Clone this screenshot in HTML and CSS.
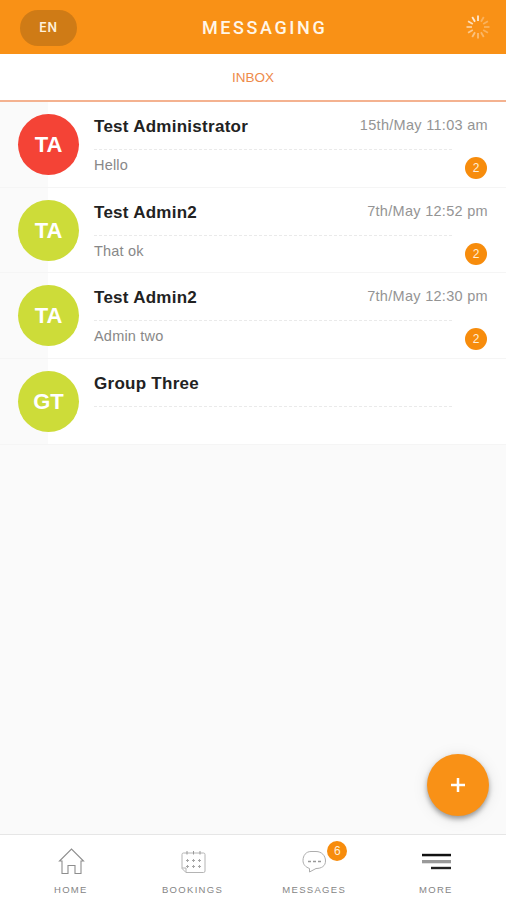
FILE: index.html
```html
<!DOCTYPE html>
<html lang="en">
<head>
<meta charset="utf-8">
<title>Messaging</title>
<link rel="stylesheet" href="styles.css">
</head>
<body>
<header class="topbar">
  <button class="lang">EN</button>
  <h1 class="title">MESSAGING</h1>
  <svg class="spinner" viewBox="-12 -12 24 24" stroke="#fff" stroke-width="1.8">
    <path d="M0-6V-11.500" opacity=".8"/>
    <path d="M0-6V-11.500" opacity=".3" transform="rotate(30)"/>
    <path d="M0-6V-11.500" opacity=".3" transform="rotate(60)"/>
    <path d="M0-6V-11.500" opacity=".3" transform="rotate(90)"/>
    <path d="M0-6V-11.500" opacity=".3" transform="rotate(120)"/>
    <path d="M0-6V-11.500" opacity=".35" transform="rotate(150)"/>
    <path d="M0-6V-11.500" opacity=".4" transform="rotate(180)"/>
    <path d="M0-6V-11.500" opacity=".45" transform="rotate(210)"/>
    <path d="M0-6V-11.500" opacity=".5" transform="rotate(240)"/>
    <path d="M0-6V-11.500" opacity=".55" transform="rotate(270)"/>
    <path d="M0-6V-11.500" opacity=".7" transform="rotate(300)"/>
    <path d="M0-6V-11.500" opacity=".8" transform="rotate(330)"/>
  </svg>
</header>
<nav class="tabs"><span class="tab">INBOX</span></nav>
<main class="content">
  <ul class="threads">
    <li class="thread">
      <div class="avatar red">TA</div>
      <div class="body">
        <div class="head"><span class="name">Test Administrator</span><time class="time">15th/May 11:03 am</time></div>
        <div class="rule"></div>
        <div class="foot"><span class="preview">Hello</span><span class="count">2</span></div>
      </div>
    </li>
    <li class="thread">
      <div class="avatar">TA</div>
      <div class="body">
        <div class="head"><span class="name">Test Admin2</span><time class="time">7th/May 12:52 pm</time></div>
        <div class="rule"></div>
        <div class="foot"><span class="preview">That ok</span><span class="count">2</span></div>
      </div>
    </li>
    <li class="thread">
      <div class="avatar">TA</div>
      <div class="body">
        <div class="head"><span class="name">Test Admin2</span><time class="time">7th/May 12:30 pm</time></div>
        <div class="rule"></div>
        <div class="foot"><span class="preview">Admin two</span><span class="count">2</span></div>
      </div>
    </li>
    <li class="thread">
      <div class="avatar">GT</div>
      <div class="body">
        <div class="head"><span class="name">Group Three</span></div>
        <div class="rule"></div>
      </div>
    </li>
  </ul>
  <button class="fab" aria-label="New message">
    <svg width="14" height="14" viewBox="0 0 14 14" stroke="#fff" stroke-width="2.5"><path d="M7 0V14M0 7H14"/></svg>
  </button>
</main>
<nav class="bottombar">
  <a class="item">
    <svg class="icon" viewBox="0 0 30 30" fill="none" stroke="#8e8e8e" stroke-width="1.1"><path d="M6 15H3.500L15.500 3L27.500 15H25V27.500H19V19.500H12V27.500H6Z"/></svg>
    <span class="label">HOME</span>
  </a>
  <a class="item">
    <svg class="icon" viewBox="0 0 30 30" fill="none" stroke="#b4b4b4"><path d="M5.500 7H25.500Q27 7 27 8.500V25Q27 26.500 25.500 26.500H8L4 22.500V8.500Q4 7 5.500 7ZM4 22H8V26.500"/><path d="M9 5V8.500M15.500 5V8.500M22 5V8.500" stroke="#999"/><path d="M8 14.500H11M14 14.500H17M20 14.500H23M8 20.500H11M14 20.500H17M20 20.500H23M9.500 13V16M15.500 13V16M21.500 13V16M9.500 19V22M15.500 19V22M21.500 19V22" stroke="#a5a5a5"/></svg>
    <span class="label">BOOKINGS</span>
  </a>
  <a class="item">
    <span class="iconwrap">
      <svg class="icon" viewBox="0 0 30 30" fill="none" stroke="#adadad"><path d="M12 5.500H17C22.500 5.500 26.500 9.500 26.500 15C26.500 20 22.500 22.500 17 22.500L10.500 26V22.500C6.500 21 4 18.500 4 14.500C4 9.500 7 5.500 12 5.500Z"/><path d="M9 15.500H12M14 15.500H17M19 15.500H22" stroke="#999" stroke-width="1.500"/></svg>
      <span class="badge">6</span>
    </span>
    <span class="label">MESSAGES</span>
  </a>
  <a class="item">
    <svg class="icon" viewBox="0 0 30 30"><path fill="#111" d="M1 7.800H30V10.300H1Z"/><path fill="#999" d="M1 14H30V17.300H1Z"/><path fill="#222" d="M10 20.800H30V23.200H10Z"/></svg>
    <span class="label">MORE</span>
  </a>
</nav>
</body>
</html>
```

FILE: styles.css
```css
* { box-sizing: border-box; }
body {
  margin: 0;
  height: 900px;
  display: flex;
  flex-direction: column;
  overflow: hidden;
  background: #fafafa;
  font-family: "Liberation Sans", sans-serif;
}
button { border: 0; padding: 0; font-family: inherit; }
.topbar {
  height: 54px;
  flex: none;
  display: grid;
  grid-template-columns: 182px 1fr 24px;
  align-items: center;
  padding: 0 16px 0 20px;
  background: #f99116;
  color: #fff;
}
.lang {
  width: 57px;
  height: 36px;
  margin-top: 1px;
  border-radius: 18px;
  background: #cf7b16;
  color: #fff1dc;
  font: 600 12.500px/34px Inter, sans-serif;
  letter-spacing: .8px;
}
.title {
  margin: 2px 0 0;
  color: #fff6e8;
  font: 500 18px/24px Roboto, sans-serif;
  letter-spacing: 2.600px;
}
.spinner { width: 24px; height: 24px; }
.tabs {
  height: 48px;
  flex: none;
  display: flex;
  justify-content: center;
  background: #fff;
  border-bottom: 2px solid #f4b290;
}
.tab { color: #ee8a4a; font-size: 13.500px; line-height: 47px; }
.content { position: relative; flex: 1; }
.threads { margin: 0; padding: 0; list-style: none; }
.thread {
  height: 85.700px;
  display: flex;
  gap: 15px;
  padding: 12px 18px 0;
  background: linear-gradient(90deg, #fafafa 48px, #fff 48px);
  border-bottom: 1px solid #f5f5f5;
}
.avatar {
  width: 61px;
  height: 61px;
  flex: none;
  border-radius: 50%;
  background: #cddc39;
  color: #fff;
  font: bold 22px/61px "Liberation Sans", sans-serif;
  text-align: center;
}
.avatar.red { background: #f44336; }
.body { flex: 1; }
.head {
  height: 35px;
  display: flex;
  justify-content: space-between;
}
.name { color: #222; font-weight: bold; font-size: 17px; line-height: 26px; letter-spacing: .270px; }
.time { color: #949494; font-size: 14.500px; line-height: 23px; letter-spacing: .300px; }
.rule { width: 358px; border-top: 1px dashed #eaeaea; }
.foot { display: flex; justify-content: space-between; }
.preview { color: #888; font-size: 14.500px; line-height: 31px; letter-spacing: .200px; }
.count {
  width: 22px;
  height: 22px;
  margin: 7px 1px 0 0;
  border-radius: 50%;
  background: #f78c0c;
  color: #ffefd9;
  font-size: 12px;
  line-height: 22px;
  text-align: center;
}
.fab {
  position: absolute;
  right: 17px;
  bottom: 18px;
  width: 62px;
  height: 62px;
  display: flex;
  align-items: center;
  justify-content: center;
  border-radius: 50%;
  background: #f99116;
  box-shadow: 0 3px 5px rgba(0,0,0,.35), 0 2px 16px rgba(0,0,0,.1);
}
.bottombar {
  height: 66px;
  flex: none;
  display: grid;
  grid-template-columns: repeat(4, 121.700px);
  padding-left: 10px;
  background: #fff;
  border-top: 1px solid #e6e6e6;
}
.item { display: flex; flex-direction: column; align-items: center; padding-top: 11px; }
.icon { width: 30px; height: 30px; display: block; }
.iconwrap { position: relative; }
.badge {
  position: absolute;
  left: 28px;
  top: -5px;
  width: 20px;
  height: 20px;
  border-radius: 50%;
  background: #f78c0c;
  color: #ffefd9;
  font-size: 12px;
  line-height: 20px;
  text-align: center;
}
.label { margin-top: 8px; color: #858585; font-size: 9.500px; line-height: 12px; letter-spacing: 1.300px; }
```
